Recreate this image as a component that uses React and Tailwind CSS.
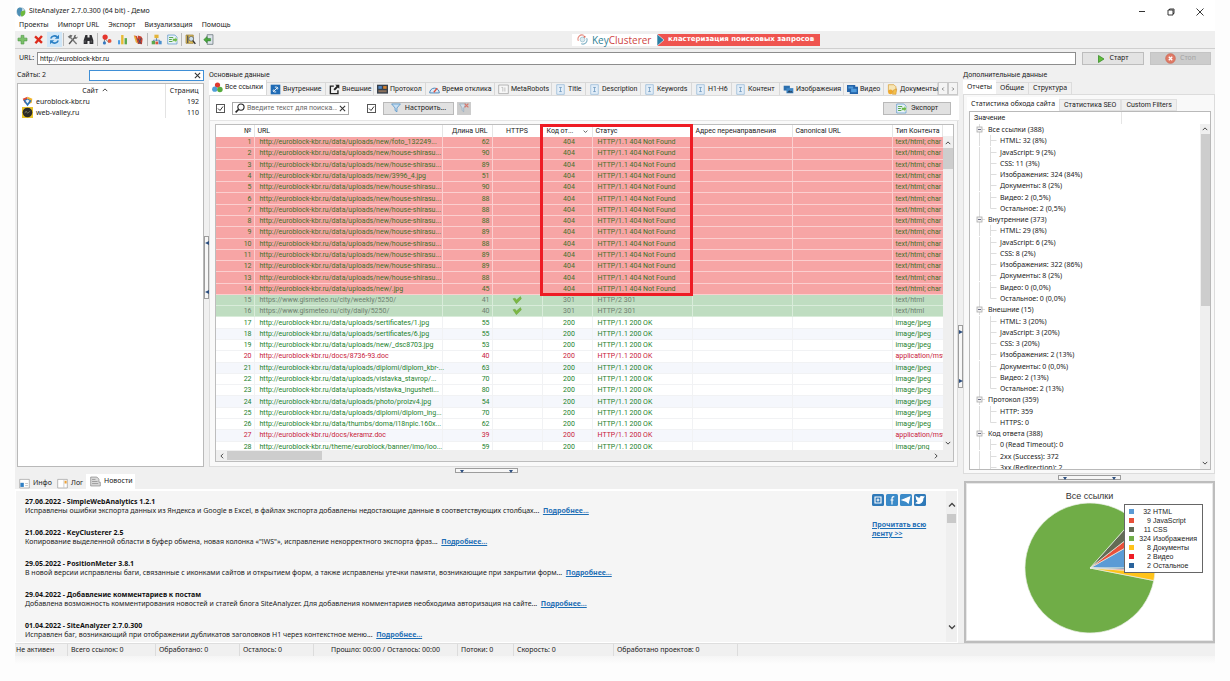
import React, { useState } from "react";

// ---------- data ----------

const HOST = "http://euroblock-kbr.ru/";
const SHIRASU = HOST + "data/uploads/new/house-shirasu...";

const notFound = [
  [HOST + "data/uploads/new/foto_132249...", 62],
  [SHIRASU, 90],
  [SHIRASU, 89],
  [HOST + "data/uploads/new/3996_4.jpg", 51],
  [SHIRASU, 90],
  [SHIRASU, 88],
  [SHIRASU, 88],
  [SHIRASU, 88],
  [SHIRASU, 89],
  [SHIRASU, 88],
  [SHIRASU, 89],
  [SHIRASU, 89],
  [SHIRASU, 88],
  [HOST + "data/uploads/new/.jpg", 45],
].map(([url, len]) => ({ url, len, code: 404, status: "HTTP/1.1 404 Not Found", type: "text/html; char", kind: "error" }));

const redirects = [
  ["https://www.gismeteo.ru/city/weekly/5250/", 41],
  ["https://www.gismeteo.ru/city/daily/5250/", 40],
].map(([url, len]) => ({ url, len, https: true, code: 301, status: "HTTP/2 301", type: "text/html", kind: "redirect" }));

const ok = [
  ["data/uploads/sertificates/1.jpg", 55, "image/jpeg"],
  ["data/uploads/sertificates/6.jpg", 55, "image/jpeg"],
  ["data/uploads/new/_dsc8703.jpg", 53, "image/jpeg"],
  ["docs/8736-93.doc", 40, "application/msw"],
  ["data/uploads/diplomi/diplom_kbr-...", 63, "image/jpeg"],
  ["data/uploads/vistavka_stavrop/...", 70, "image/jpeg"],
  ["data/uploads/vistavka_ingusheti...", 80, "image/jpeg"],
  ["data/uploads/photo/proizv4.jpg", 54, "image/jpeg"],
  ["data/uploads/diplomi/diplom_ing...", 70, "image/jpeg"],
  ["data/thumbs/doma/l18npic.160x...", 62, "image/jpeg"],
  ["docs/keramz.doc", 39, "application/msw"],
  ["theme/euroblock/banner/imo/loo...", 59, "image/png"],
].map(([path, len, type]) => ({
  url: HOST + path,
  len,
  code: 200,
  status: "HTTP/1.1 200 OK",
  type,
  kind: type === "application/msw" ? "doc" : "ok",
}));

const rows = [...notFound, ...redirects, ...ok];

const rowStyle = {
  error: "bg-[#f7a5a5] text-[#44702a]",
  redirect: "bg-[#bfddc1] text-[#6f7f70]",
  ok: "text-[#23822c]",
  doc: "text-[#c8203a]",
};

const cellBorder = {
  error: "border-[#fbcfcf]",
  redirect: "border-[#d9ecda]",
  ok: "border-[#f1f2f4]",
  doc: "border-[#f1f2f4]",
};

const tree = [
  ["Все ссылки (388)", ["HTML: 32 (8%)", "JavaScript: 9 (2%)", "CSS: 11 (3%)", "Изображения: 324 (84%)", "Документы: 8 (2%)", "Видео: 2 (0,5%)", "Остальное: 2 (0,5%)"]],
  ["Внутренние (373)", ["HTML: 29 (8%)", "JavaScript: 6 (2%)", "CSS: 8 (2%)", "Изображения: 322 (86%)", "Документы: 8 (2%)", "Видео: 0 (0,0%)", "Остальное: 0 (0,0%)"]],
  ["Внешние (15)", ["HTML: 3 (20%)", "JavaScript: 3 (20%)", "CSS: 3 (20%)", "Изображения: 2 (13%)", "Документы: 0 (0,0%)", "Видео: 2 (13%)", "Остальное: 2 (13%)"]],
  ["Протокол (359)", ["HTTP: 359", "HTTPS: 0"]],
  ["Код ответа (388)", ["0 (Read Timeout): 0", "2xx (Success): 372", "3xx (Redirection): 2"]],
];

const treeRows = tree.flatMap(([title, items]) => [
  { text: title, head: true },
  ...items.map((text, i) => ({ text, last: i === items.length - 1 && title !== "Код ответа (388)" })),
]);

const news = [
  ["27.06.2022 - SimpleWebAnalytics 1.2.1", "Исправлены ошибки экспорта данных из Яндекса и Google в Excel, в файлах экспорта добавлены недостающие данные в соответствующих столбцах..."],
  ["21.06.2022 - KeyClusterer 2.5", "Копирование выделенной области в буфер обмена, новая колонка «\"!WS\"», исправление некорректного экспорта фраз..."],
  ["29.05.2022 - PositionMeter 3.8.1", "В новой версии исправлены баги, связанные с иконками сайтов и открытием форм, а также исправлены утечки памяти, возникающие при закрытии форм..."],
  ["29.04.2022 - Добавление комментариев к постам", "Добавлена возможность комментирования новостей и статей блога SiteAnalyzer. Для добавления комментариев необходима авторизация на сайте..."],
  ["01.04.2022 - SiteAnalyzer 2.7.0.300", "Исправлен баг, возникающий при отображении дубликатов заголовков H1 через контекстное меню..."],
];

const slices = [
  { label: "HTML", value: 32, color: "#5b9bd5" },
  { label: "JavaScript", value: 9, color: "#e8503a" },
  { label: "CSS", value: 11, color: "#636b55" },
  { label: "Изображения", value: 324, color: "#70ad47" },
  { label: "Документы", value: 8, color: "#ffc31a" },
  { label: "Видео", value: 2, color: "#ee1c25" },
  { label: "Остальное", value: 2, color: "#2a639c" },
];

// ---------- icons ----------

const Svg = ({ children, className = "size-[11px]" }) => (
  <svg viewBox="0 0 16 16" className={`shrink-0 ${className}`} fill="none" aria-hidden="true">
    {children}
  </svg>
);

const AppIcon = () => (
  <Svg className="size-[10px]">
    <circle cx="8" cy="8" r="6.5" fill="#cfe4ee" stroke="#7fa9bd" />
    <path d="M3 2c3-2 7-1 7 2S8 9 8 12l-2 3C2 13 0 6 3 2z" fill="#4f8fb5" />
    <path d="M8 7l6-2c2 4 0 9-5 10-2-2-2-5-1-8z" fill="#6fba3e" />
  </Svg>
);
const PlusIcon = () => (
  <Svg>
    <path d="M6 2h4v4h4.500v4H10v4.500H6V10H1.500V6H6z" fill="#7cc06a" stroke="#4d9a45" />
  </Svg>
);
const CrossIcon = () => (
  <Svg>
    <path d="M3 3.500l10 9.500M13 3L3.500 13.500" stroke="#dd2a1b" strokeWidth="3.500" />
  </Svg>
);
const RefreshIcon = () => (
  <Svg>
    <path d="M2.500 6.500C4 2.500 9 1.500 12 4.500" stroke="#2a7fc4" strokeWidth="2.200" />
    <path d="M14.500 1v6h-6z" fill="#2a7fc4" />
    <path d="M13.500 9.500c-1.500 4-6.500 5-9.500 2" stroke="#2a7fc4" strokeWidth="2.200" />
    <path d="M1.500 15V9h6z" fill="#2a7fc4" />
  </Svg>
);
const ToolsIcon = () => (
  <Svg>
    <path d="M3 14.500L12 4" stroke="#555" strokeWidth="2" />
    <path d="M10 5c-.5-3 1.500-4 3.500-4L12 3.500 13.500 5 15.500 3.500c0 3-2.500 4-4.500 3.200z" fill="#666" />
    <path d="M5.500 5.500l8.500 9" stroke="#777" strokeWidth="2" />
    <path d="M1 4l4-3 3 1-3.500 5z" fill="#6d6d6d" />
  </Svg>
);
const BinocularsIcon = () => (
  <Svg>
    <path d="M3.500 1.500h3V5h3V1.500h3L15 9v5.500H9.500V10h-3v4.500H1V9z" fill="#2f2f33" />
    <path d="M3 9.500v3M12 9.500v3" stroke="#888" />
  </Svg>
);
const NodesIcon = () => (
  <Svg>
    <path d="M5 6l7 7M5 6v7" stroke="#555" />
    <circle cx="6" cy="4.500" r="3.800" fill="#e5352c" />
    <circle cx="12.500" cy="10" r="2.800" fill="#e5533c" />
    <circle cx="5" cy="13" r="2.300" fill="#3479c0" />
  </Svg>
);
const BarsIcon = () => (
  <Svg>
    <path d="M1.500 9h3v6h-3z" fill="#4c9be0" />
    <path d="M6 1.500h3.500V15H6z" fill="#e7bb33" />
    <path d="M11 6h3.500v9H11z" fill="#5aa84e" />
  </Svg>
);
const ChartFlagIcon = () => (
  <Svg>
    <path d="M1.500 2l4 1 1.500 4V2l5 1.500L14 7l-1 8-6-1z" fill="#c9402f" />
    <path d="M1 2l3 1.500 3 10.500-3-2z" fill="#e9b03c" />
    <path d="M7 7l5 7M8 14l4-8" stroke="#34506f" strokeWidth="1.300" />
  </Svg>
);
const SitemapIcon = () => (
  <Svg>
    <path d="M8 5v5M3.500 12V9h9v3" stroke="#3c6fa5" />
    <path d="M5 1h6v5H5z" fill="#e3b43a" />
    <path d="M1 10h5v5H1z" fill="#5aa84e" />
    <path d="M6.500 11h4v4h-4z" fill="#d9573c" />
    <path d="M11 10h4.500v5H11z" fill="#4a90cf" />
  </Svg>
);
const ExportIcon = () => (
  <Svg>
    <path d="M1 1.500h10.500l3 3v10H1z" fill="#e8f2fb" stroke="#5591c4" />
    <path d="M3 5h6M3 8h4M3 11h5" stroke="#5aa84e" strokeWidth="1.500" />
    <path d="M8 6.500h4V4l3.500 4.500L12 13v-2.500H8z" fill="#6cb94a" stroke="#fff" strokeWidth=".6" />
  </Svg>
);
const ZipIcon = () => (
  <Svg>
    <path d="M1.500 1.500H12v12H1.500z" fill="#e9c75b" stroke="#93762a" />
    <path d="M4 2v11" stroke="#555" strokeWidth="2" />
    <circle cx="9" cy="7" r="3.500" fill="#cde0ee" stroke="#555" />
    <path d="M11.500 9.500l3.500 5" stroke="#333" strokeWidth="2" />
  </Svg>
);
const ExitIcon = () => (
  <Svg>
    <path d="M6 1h8.500v14H6z" fill="#dce4ea" stroke="#5c6770" />
    <path d="M6 6.500h5v3.500H6v3L1 8.200 6 3.500z" fill="#4ba83e" stroke="#27752a" strokeWidth=".7" />
  </Svg>
);
const BallsIcon = () => (
  <Svg>
    <circle cx="8" cy="4.500" r="3.800" fill="#e0392f" />
    <circle cx="4" cy="10.500" r="3.800" fill="#4f9fd8" />
    <circle cx="11.500" cy="11" r="4" fill="#56ab3c" />
  </Svg>
);
const InnerIcon = () => (
  <Svg>
    <path d="M1 1h14v14H1z" fill="#1f6bb5" />
    <path d="M5 11l6-6M7 4.500h2.500c2 0 2.500 2 1 3.500M9 11.500H6.500c-2 0-2.500-2-1-3.500" stroke="#fff" strokeWidth="1.300" />
  </Svg>
);
const OuterIcon = () => (
  <Svg>
    <path d="M7 3H2v11h11V9" stroke="#222" strokeWidth="2" />
    <path d="M9 1h6v6l-2-2-4.500 4.500-2-2L11 3z" fill="#222" />
  </Svg>
);
const ProtocolIcon = () => (
  <Svg>
    <path d="M0 1h16v13H0z" fill="#37404c" />
    <path d="M2 3h5v4H2z" fill="#4f86c4" />
    <path d="M9 3h5v4H9z" fill="#d4822f" />
    <path d="M2 9h12v3H2z" fill="#8a6f5a" />
  </Svg>
);
const GaugeIcon = () => (
  <Svg>
    <path d="M1 13a7 7 0 0 1 14 0z" fill="#dbeaf6" stroke="#4a84b8" strokeWidth="1.400" />
    <path d="M7 12l5-6" stroke="#e04a35" strokeWidth="1.800" />
  </Svg>
);
const RobotsIcon = () => (
  <Svg>
    <path d="M1 1.500h14v12.500H1z" fill="#f7f7f7" stroke="#999" />
    <path d="M5 5h2v6M10 5v6" stroke="#aaa" />
  </Svg>
);
const PageIcon = () => (
  <Svg>
    <path d="M2.500 1h11v14h-11z" fill="#e3eef8" stroke="#8fb4d6" />
    <path d="M6 5h4M8 5v6M6 11h4" stroke="#5f8db8" />
  </Svg>
);
const PictureIcon = () => (
  <Svg>
    <path d="M1 2.500h9v7H1z" fill="#2c6fae" />
    <path d="M5 6h10v7.500H5z" fill="#3d86c6" />
    <path d="M6 12.500l3-3.500 2 2 1.500-1 2 2.500z" fill="#27405c" />
  </Svg>
);
const FilmIcon = () => (
  <Svg>
    <path d="M0 1.500h12v10H0zM4 4h12v10.500H4z" fill="#2463a8" />
    <path d="M2 3.500h7v3H2zM6 7h8v5H6z" fill="#4f9bdc" />
  </Svg>
);
const DocsIcon = () => (
  <Svg>
    <path d="M2 1h8l3 3v7H2z" fill="#f6e5b5" stroke="#d79b2d" />
    <circle cx="5" cy="11.500" r="3.500" fill="#efa92f" />
    <path d="M9 9l5-2-1 8H8z" fill="#f3c14b" stroke="#c8882a" strokeWidth=".7" />
  </Svg>
);
const PlayIcon = () => (
  <Svg className="size-2">
    <path d="M3 1l11 7-11 7z" fill="#63bd3c" stroke="#318a23" strokeWidth="1.500" />
  </Svg>
);
const StopIcon = () => (
  <Svg>
    <circle cx="8" cy="8" r="7" fill="#e07a66" stroke="#c96450" />
    <path d="M5.500 5.500l5 5M10.500 5.500l-5 5" stroke="#fff" strokeWidth="2" />
  </Svg>
);
const FunnelIcon = () => (
  <Svg className="size-[10px]">
    <path d="M1 1.500h14L9.500 8v6L6.500 12V8z" fill="#c6def2" stroke="#4a8cc4" strokeWidth="1.200" />
  </Svg>
);
const SearchIcon = () => (
  <Svg className="size-[10px]">
    <circle cx="9.500" cy="6.500" r="5" stroke="#222" strokeWidth="1.800" />
    <path d="M6 10l-5 5" stroke="#222" strokeWidth="2.600" />
  </Svg>
);
const XMark = () => (
  <Svg className="size-[7px]">
    <path d="M2 2l12 12M14 2L2 14" stroke="#333" strokeWidth="2.400" />
  </Svg>
);
const CheckMark = () => (
  <Svg className="size-[10px] mx-auto">
    <path d="M1.500 6L5 5l2 3 6.500-5.500L15 6l-8 8z" fill="#7cb843" stroke="#5d9a35" strokeWidth=".6" />
  </Svg>
);
const Chevron = ({ dir, className = "size-[7px]" }) => {
  const d = { up: "M2 11l6-6 6 6", down: "M2 5l6 6 6-6", left: "M11 2L5 8l6 6", right: "M5 2l6 6-6 6" }[dir];
  return (
    <Svg className={className}>
      <path d={d} stroke="#444" strokeWidth="2.600" />
    </Svg>
  );
};
const SiteCube = () => (
  <Svg>
    <path d="M8 1L1 4l3 6 4 2z" fill="#e24a34" />
    <path d="M8 1l7 3-1 6-6 2z" fill="#f0b52d" />
    <path d="M2 6l6 9 6-8-6-3z" fill="#2a72b5" />
    <path d="M8 5l3 2-3 4-3-4z" fill="#e9f1f8" />
  </Svg>
);
const SiteGear = () => (
  <Svg>
    <path d="M0 0h16v16H0z" fill="#e6c229" />
    <circle cx="8" cy="8" r="7" fill="#2c2c28" />
    <path d="M4 9l2-3 2 3 4-3" stroke="#8a8a72" />
  </Svg>
);
const InfoTabIcon = () => (
  <Svg>
    <path d="M1 2h14v12.500H1z" fill="#fff" stroke="#9a9a9a" />
    <path d="M2 7h5v6H2z" fill="#2f7fc4" />
    <path d="M9 8h4M9 11h4" stroke="#aaa" />
  </Svg>
);
const LogTabIcon = () => (
  <Svg>
    <path d="M1 2h14v12.500H1z" fill="#fff" stroke="#9a9a9a" />
    <path d="M10 3v11" stroke="#bbb" />
    <path d="M11 4h3v4h-3z" fill="#eda239" />
  </Svg>
);
const NewsTabIcon = () => (
  <Svg>
    <path d="M1 1.500h9l3 3V9H15v5.500H1z" fill="#d9d9d9" stroke="#858585" />
    <path d="M3 5h5M3 8h8M3 11h9" stroke="#858585" />
  </Svg>
);
const ClusterLogo = () => (
  <Svg>
    <path d="M2 10a6 6 0 0 1 8-8" stroke="#e3887d" strokeWidth="1.500" />
    <circle cx="8" cy="8" r="3.500" fill="#dcebf0" stroke="#8fb9c9" />
    <path d="M14 6a6 6 0 0 1-8 8" stroke="#7fb0c4" strokeWidth="1.500" />
    <circle cx="11" cy="4" r="1.500" fill="#db6a5c" />
  </Svg>
);

// ---------- small parts ----------

const Sep = () => <span className="w-px h-[13px] bg-[#b9b9b9]" />;

const ToolButton = ({ label, active, children }) => (
  <button aria-label={label} className={`w-[15px] h-[15px] grid place-items-center ${active ? "bg-[#cfe6f8]" : ""}`}>
    {children}
  </button>
);

const Tick = ({ label }) => (
  <span className="grid size-[9px] shrink-0">
    <input type="checkbox" defaultChecked aria-label={label} className="col-start-1 row-start-1 appearance-none size-[9px] border border-[#555] bg-white" />
    <svg viewBox="0 0 9 9" className="col-start-1 row-start-1 size-[9px] pointer-events-none" fill="none">
      <path d="M2 4.500l2 2 3-4" stroke="#333" />
    </svg>
  </span>
);

const Grip = ({ vertical, dir }) => (
  <span className={`flex justify-between items-center border border-[#9d9d9d] bg-[#f7f7f7] ${vertical ? "flex-col w-[5px] h-[63px] py-1" : "w-[63px] h-[5px] px-1"}`}>
    {[0, 1].map((i) => (
      <svg key={i} viewBox="0 0 4 4" className="size-1" aria-hidden="true">
        <path d={dir === "left" ? "M4 0v4L0 2z" : dir === "right" ? "M0 0v4l4-2z" : "M0 1h4L2 4z"} fill="#2d4f80" />
      </svg>
    ))}
  </span>
);

const Pie = () => {
  const total = slices.reduce((sum, s) => sum + s.value, 0);
  let angle = 0;
  const point = (a) => `${66 + 65 * Math.cos(a)} ${66 - 65 * Math.sin(a)}`;
  return (
    <svg viewBox="0 0 132 132" className="size-[132px]" role="img" aria-label="Все ссылки">
      {slices.map((s) => {
        const from = angle;
        angle += (s.value / total) * Math.PI * 2;
        const large = angle - from > Math.PI ? 1 : 0;
        return <path key={s.label} d={`M66 66L${point(from)}A65 65 0 ${large} 0 ${point(angle)}Z`} fill={s.color} stroke="#e8eee4" strokeWidth=".7" />;
      })}
    </svg>
  );
};

// ---------- sections ----------

const Header = () => (
  <header>
    <div className="flex items-center h-[19px] pt-1 pl-px pr-[10px]">
      <AppIcon />
      <h1 className="ml-[3px] flex-1">SiteAnalyzer 2.7.0.300 (64 bit) - Демо</h1>
      <div className="flex gap-[19px]">
        <button aria-label="Свернуть" className="w-[10px] grid place-items-center"><span className="w-[6px] h-px bg-[#333]" /></button>
        <button aria-label="Развернуть" className="w-[10px] grid place-items-center">
          <Svg className="size-2"><path d="M2 4h10v10H2zM5 4V2h9v9h-2" stroke="#222" strokeWidth="1.800" /></Svg>
        </button>
        <button aria-label="Закрыть" className="w-[10px] grid place-items-center">
          <Svg className="size-2"><path d="M1 1l14 14M15 1L1 15" stroke="#222" strokeWidth="1.800" /></Svg>
        </button>
      </div>
    </div>
    <nav className="flex items-center h-3 pl-1 gap-[9px]">
      {["Проекты", "Импорт URL", "Экспорт", "Визуализация", "Помощь"].map((m) => (
        <button key={m}>{m}</button>
      ))}
    </nav>
    <div className="flex items-center h-[18px] bg-[#efefef] border-b border-[#cfcfcf]">
      <div className="flex items-center gap-px w-[557px] shrink-0">
        <ToolButton label="Добавить"><PlusIcon /></ToolButton>
        <ToolButton label="Удалить"><CrossIcon /></ToolButton>
        <ToolButton label="Обновить" active><RefreshIcon /></ToolButton>
        <Sep />
        <ToolButton label="Настройки"><ToolsIcon /></ToolButton>
        <ToolButton label="Поиск"><BinocularsIcon /></ToolButton>
        <Sep />
        <ToolButton label="Граф"><NodesIcon /></ToolButton>
        <ToolButton label="Диаграмма"><BarsIcon /></ToolButton>
        <ToolButton label="График"><ChartFlagIcon /></ToolButton>
        <Sep />
        <ToolButton label="Карта сайта"><SitemapIcon /></ToolButton>
        <ToolButton label="Экспорт в Excel"><ExportIcon /></ToolButton>
        <Sep />
        <ToolButton label="Архив"><ZipIcon /></ToolButton>
        <Sep />
        <ToolButton label="Выход"><ExitIcon /></ToolButton>
      </div>
      <a href="#keyclusterer" className="flex h-3 items-center">
        <span className="flex items-center gap-1 h-full bg-white w-[85px] pl-[5px] text-[10px] leading-3 font-['Open_Sans',sans-serif]">
          <ClusterLogo />
          <span className="text-[#2f8296]">Key<span className="text-[#cf4543]">Clusterer</span></span>
        </span>
        <span className="flex items-center h-full bg-[#ef544f] text-white font-bold pr-[6px] font-['DejaVu_Sans',sans-serif]">
          <svg viewBox="0 0 8 12" className="w-2 h-3 mr-[3px]" aria-hidden="true"><path d="M0 0l7 6-7 6z" fill="#2b7fa4" stroke="#fff" strokeWidth=".6" /></svg>
          кластеризация поисковых запросов
        </span>
      </a>
    </div>
    <div className="flex items-center h-[19px] pl-1 pr-1 bg-[#f0f0f0]">
      <label htmlFor="url" className="w-[18px]">URL:</label>
      <input id="url" defaultValue="http://euroblock-kbr.ru" className="flex-1 h-[13px] px-0.5 bg-white border border-[#8d8d8d] font-[Roboto,sans-serif]" />
      <button className="ml-[6px] flex items-center justify-center gap-1 w-[62px] h-[13px] bg-[#e3e3e3] border border-[#bdbdbd]">
        <PlayIcon />Старт
      </button>
      <button disabled className="ml-[6px] flex items-center justify-center gap-1 w-[61px] h-[13px] bg-[#cccccc] border border-[#c4c4c4] text-[#a5a5a5]">
        <StopIcon />Стоп
      </button>
    </div>
  </header>
);

const Sites = () => (
  <section className="w-[189px] shrink-0 pl-0.5 flex flex-col">
    <div className="flex items-center h-[15px]">
      <label htmlFor="site-filter" className="w-[78px]">Сайты: 2</label>
      <div className="flex-1 flex items-center h-[11px] pr-0.5 bg-white border border-[#3f8fd6]">
        <input id="site-filter" className="flex-1 min-w-0 px-0.5 outline-none h-[9px]" />
        <button aria-label="Очистить"><XMark /></button>
      </div>
    </div>
    <div className="flex-1 bg-white border border-[#b9b9b9]">
      <table className="w-full table-fixed leading-[11px]">
        <thead>
          <tr className="h-3">
            <th className="font-normal pl-2">
              <span className="inline-flex items-center gap-1">Сайт <Chevron dir="up" className="size-[6px]" /></span>
            </th>
            <th className="font-normal w-[38px] border-l border-[#e3e3e3]">Страниц</th>
          </tr>
        </thead>
        <tbody>
          <tr>
            <td><span className="flex items-center gap-[3px] pl-1"><SiteCube />euroblock-kbr.ru</span></td>
            <td className="text-right pr-1 border-l border-[#e3e3e3]">192</td>
          </tr>
          <tr>
            <td><span className="flex items-center gap-[3px] pl-1"><SiteGear />web-valley.ru</span></td>
            <td className="text-right pr-1 border-l border-[#e3e3e3]">110</td>
          </tr>
        </tbody>
      </table>
    </div>
  </section>
);

const mainTabs = [
  ["Все ссылки", BallsIcon, "w-[58px]"],
  ["Внутренние", InnerIcon, "w-[59px]"],
  ["Внешние", OuterIcon, "w-[48px]"],
  ["Протокол", ProtocolIcon, "w-[52px]"],
  ["Время отклика", GaugeIcon, "w-[69px]"],
  ["MetaRobots", RobotsIcon, "w-[57px]"],
  ["Title", PageIcon, "w-[34px]"],
  ["Description", PageIcon, "w-[55px]"],
  ["Keywords", PageIcon, "w-[51px]"],
  ["H1-H6", PageIcon, "w-[40px]"],
  ["Контент", PageIcon, "w-[48px]"],
  ["Изображения", PictureIcon, "w-[64px]"],
  ["Видео", FilmIcon, "w-[40px]"],
  ["Документы", DocsIcon, "w-[54px]"],
];

const columns = [
  ["№", "w-[38px]", "text-right pr-0.5"],
  ["URL", "w-[188px]", "text-left pl-[3px]"],
  ["Длина URL", "w-[50px]", "text-right pr-1"],
  ["HTTPS", "w-[50px]", "text-center"],
  ["Код от...", "w-[50px]", "text-left pl-1"],
  ["Статус", "w-[100px]", "text-left pl-[3px]"],
  ["Адрес перенаправления", "w-[100px]", "text-left pl-[3px]"],
  ["Canonical URL", "w-[100px]", "text-left pl-[3px]"],
  ["Тип Контента", "", "text-left pl-[3px]"],
];

const LinksTable = () => (
  <div className="relative flex-1 min-h-0 flex flex-col bg-white border border-[#bdbdbd]">
    <div className="flex-1 min-h-0 flex">
      <div className="flex-1 min-w-0 overflow-hidden">
        <table className="w-full h-[328px] table-fixed leading-[10px] whitespace-nowrap">
          <thead>
            <tr className="h-3">
              {columns.map(([name, width, align]) => (
                <th key={name} className={`font-normal border-r border-[#e5e5e5] ${width} ${align}`}>
                  {name === "Код от..." ? (
                    <span className="flex items-center justify-between pr-1">{name}<Chevron dir="down" className="size-[5px]" /></span>
                  ) : name}
                </th>
              ))}
            </tr>
          </thead>
          <tbody>
            {rows.map((row, i) => (
              <tr key={i} className={`border-b ${cellBorder[row.kind]} ${rowStyle[row.kind]} ${i > 15 && i % 3 === 2 ? "bg-[#f5f7fc]" : ""}`}>
                <td className={`text-right pr-0.5 border-r ${cellBorder[row.kind]}`}>{i + 1}</td>
                <td className={`pl-[5px] border-r ${cellBorder[row.kind]}`}>{row.url}</td>
                <td className={`text-right pr-0.5 border-r ${cellBorder[row.kind]}`}>{row.len}</td>
                <td className={`border-r ${cellBorder[row.kind]}`}>{row.https && <CheckMark />}</td>
                <td className={`text-center pl-1 border-r ${cellBorder[row.kind]}`}>{row.code}</td>
                <td className={`pl-[5px] border-r ${cellBorder[row.kind]}`}>{row.status}</td>
                <td className={`border-r ${cellBorder[row.kind]}`} />
                <td className={`border-r ${cellBorder[row.kind]}`} />
                <td className="pl-[3px]">{row.type}</td>
              </tr>
            ))}
          </tbody>
        </table>
      </div>
      <div className="w-[10px] mt-[11px] bg-[#efefef] flex flex-col items-center pt-1 pb-1">
        <Chevron dir="up" className="size-[6px]" />
        <span className="mt-0.5 w-full h-[21px] bg-[#cdcdcd]" />
        <Chevron dir="down" className="size-[6px] mt-auto" />
      </div>
    </div>
    <div className="h-[11px] bg-[#efefef] flex items-center pl-[3px] pr-[14px]">
      <Chevron dir="left" className="size-[6px]" />
      <span className="ml-0.5 w-[95px] h-[9px] bg-[#cdcdcd]" />
      <Chevron dir="right" className="size-[6px] ml-auto" />
    </div>
    {/* highlight around the 404 block */}
    <div className="absolute -top-px left-[324px] w-[153px] h-[172px] border-3 border-[#ee1c24]" />
  </div>
);

const MainData = () => {
  const [tab, setTab] = useState("Все ссылки");
  return (
    <section className="flex-1 min-w-0 flex flex-col font-[Roboto,sans-serif]">
      <h2 className="h-3 pt-0.5 leading-[10px]">Основные данные</h2>
      <div className="flex items-end h-[15px]">
        {mainTabs.map(([name, Icon, width]) => (
          <button
            key={name}
            onClick={() => setTab(name)}
            className={`${width} shrink-0 flex items-center gap-[2px] pl-[3px] whitespace-nowrap border-r border-[#d8d8d8] ${tab === name ? "h-[15px] bg-white" : "h-[13px] bg-[#f0f0f0] border-t"}`}
          >
            <Icon />{name}
          </button>
        ))}
        <div className="ml-auto flex">
          {["left", "right"].map((dir) => (
            <button key={dir} aria-label={dir === "left" ? "Назад" : "Вперёд"} className="w-[10px] h-[13px] grid place-items-center bg-[#f4f4f4] border border-[#c9c9c9]">
              <Chevron dir={dir} className="size-1" />
            </button>
          ))}
        </div>
      </div>
      <div className="flex-1 min-h-0 flex flex-col bg-[#f9f9f9] border border-[#dcdcdc] pl-[5px] pr-[3px] pb-1">
        <div className="flex items-center h-[25px] bg-white -mx-[5px] pl-[6px] pr-2 mb-[3px] border-b border-[#e5e5e5]">
          <Tick label="Фильтр по тексту" />
          <div className="ml-[7px] flex items-center gap-0.5 w-[117px] h-[13px] px-0.5 border border-[#a9a9a9] bg-white">
            <SearchIcon />
            <input aria-label="Поиск" placeholder="Введите текст для поиска..." className="flex-1 min-w-0 outline-none placeholder:text-[#666]" />
            <button aria-label="Очистить"><XMark /></button>
          </div>
          <span className="w-[18px]" />
          <Tick label="Использовать фильтр" />
          <button className="ml-[7px] flex items-center justify-center gap-1 w-[71px] h-[13px] bg-[#e1e1e1] border border-[#b9b9b9] font-['Noto_Sans',sans-serif]">
            <FunnelIcon />Настроить...
          </button>
          <button disabled aria-label="Сбросить фильтр" className="ml-[3px] w-[14px] h-[13px] grid place-items-center bg-[#cccccc]">
            <Svg className="size-[10px]">
              <path d="M1 1.500h10L7.500 8v6L5 12V8z" fill="#d5dfe8" stroke="#8aa3b8" />
              <path d="M9 1l6 6M15 1L9 7" stroke="#d9786c" strokeWidth="2" />
            </Svg>
          </button>
          <button className="ml-auto flex items-center justify-center gap-1 w-[68px] h-[13px] bg-[#e1e1e1] border border-[#b9b9b9]">
            <ExportIcon />Экспорт
          </button>
        </div>
        <LinksTable />
      </div>
    </section>
  );
};

const NewsPanel = () => (
  <section className="mr-[5px] flex flex-col">
    <div className="flex items-end h-[15px]">
      {[["Инфо", InfoTabIcon, "w-[38px]"], ["Лог", LogTabIcon, "w-[33px]"], ["Новости", NewsTabIcon, "w-[49px]"]].map(([name, Icon, width]) => (
        <button key={name} className={`${width} flex items-center gap-[3px] pl-1 ${name === "Новости" ? "h-[15px] bg-white" : "h-3"}`}>
          <Icon />{name}
        </button>
      ))}
    </div>
    <div className="flex-1 flex border border-white border-t-2 bg-[#f5f5f5] leading-[9px]">
      <ul className="flex-1 pt-[6px] pb-[3px] pl-[9px]">
        {news.map(([title, text]) => (
          <li key={title} className="not-last:h-[31px]">
            <h3 className="font-bold text-[#111]">{title}</h3>
            <p>{text}&nbsp; <a href="#more" className="font-bold underline text-[#1f6fb5]">Подробнее...</a></p>
          </li>
        ))}
      </ul>
      <aside className="w-[74px] pt-[3px]">
        <div className="flex gap-0.5">
          {[
            ["ВКонтакте", "M4 4h8v8H4zM8 6v4M6 8h4"],
            ["Facebook", "M8 14V6c0-2 1-2.500 3-2.500M6 8h4"],
            ["Telegram", "M3 8l10-4-2 8-3-2.500z"],
            ["Twitter", "M3 12c6 2 9-2 9-7l1-1-3-.5C8 3.500 8 5 8 6 6 6 4 5 3 4c0 3 1 4 3 5.500z"],
          ].map(([name, d], i) => (
            <a key={name} href="#social" aria-label={name}>
              <Svg className="size-3">
                <rect width="16" height="16" rx="2" fill={i % 3 === 0 ? "#2f79b8" : "#3b8ac8"} />
                <path d={d} stroke="#fff" strokeWidth="1.500" fill={i > 1 ? "#fff" : "none"} />
              </Svg>
            </a>
          ))}
        </div>
        <a href="#all" className="block mt-[14px] font-bold underline text-[#1f6fb5]">Прочитать всю<br />ленту &gt;&gt;</a>
      </aside>
      <div className="w-[11px] bg-[#efefef] flex flex-col items-center pt-[10px] pb-[11px]">
        <Chevron dir="up" className="size-[8px]" />
        <span className="mt-[5px] w-[9px] h-[9px] bg-[#c9c9c9]" />
        <Chevron dir="down" className="size-[8px] mt-auto" />
      </div>
    </div>
  </section>
);

const Extra = () => (
  <section className="w-[252px] shrink-0 flex flex-col min-h-0">
    <h2 className="h-3 pt-0.5 leading-[10px] font-[Roboto,sans-serif]">Дополнительные данные</h2>
    <div className="flex items-end h-[14px]">
      {["Отчеты", "Общие", "Структура"].map((t, i) => (
        <button key={t} className={`px-1 ${i === 0 ? "h-[14px] bg-white" : "h-3 border-t border-r border-[#dcdcdc]"}`}>{t}</button>
      ))}
    </div>
    <div className="flex-1 min-h-0 flex flex-col bg-[#f9f9f9] border border-[#dcdcdc] p-[3px] pt-0.5">
      <div className="flex items-end h-[14px]">
        {["Статистика обхода сайта", "Статистика SEO", "Custom Filters"].map((t, i) => (
          <button key={t} className={`px-1 whitespace-nowrap ${i === 0 ? "h-[14px] bg-white" : "h-3 bg-[#efefef] border border-[#e0e0e0] font-[Roboto,sans-serif]"}`}>{t}</button>
        ))}
      </div>
      <div className="flex-1 min-h-0 ml-0.5 flex flex-col bg-white border border-[#b9b9b9] overflow-hidden">
        <div className="h-3 shrink-0 pl-1 leading-3 font-[Roboto,sans-serif]"><span className="block w-[148px] border-r border-[#e5e5e5]">Значение</span></div>
        <div className="flex-1 min-h-0 flex">
          <ul className="flex-1 min-h-0 grid content-start auto-rows-fr h-[349px] leading-[11px]">
            {treeRows.map((row, i) =>
              row.head ? (
                <li key={i} className="flex items-center pl-[6px]">
                  <svg viewBox="0 0 9 11" className="w-[9px] h-[11px]" fill="none">
                    <path d="M3.500 0v11M6 5.500h3" stroke="#ddd" />
                    <rect x="1" y="3" width="5" height="5" fill="#f4f4f4" stroke="#aaa" strokeWidth=".8" />
                    <path d="M2 5.500h3" stroke="#446" strokeWidth=".8" />
                  </svg>
                  <span className="ml-[3px]">{row.text}</span>
                </li>
              ) : (
                <li key={i} className="flex items-center pl-[6px]">
                  <svg viewBox="0 0 22 11" className="w-[22px] h-[11px]" fill="none">
                    <path d={row.last ? "M3.500 0v11M14.500 0v5.500h6" : "M3.500 0v11M14.500 0v11M14.500 5.500h6"} stroke="#ddd" />
                  </svg>
                  <span className="ml-0.5">{row.text}</span>
                </li>
              )
            )}
          </ul>
          <div className="w-[10px] bg-[#efefef] flex flex-col items-center pt-0.5 pb-[3px]">
            <Chevron dir="up" className="size-[6px]" />
            <span className="mt-0.5 w-[9px] h-[172px] bg-[#cdcdcd]" />
            <Chevron dir="down" className="size-[6px] mt-auto" />
          </div>
        </div>
      </div>
    </div>
    <div className="h-[7px] flex items-center justify-center"><Grip /></div>
    <div className="relative ml-px bg-white border-2 border-[#bdbdbd] outline-1 outline-[#e8e8e8] -outline-offset-3 h-[162px] flex flex-col items-center pt-[9px] font-['Liberation_Sans',Arial,sans-serif]">
      <h3 className="text-[9px] leading-[9px] text-[#333] mb-px">Все ссылки</h3>
      <Pie />
      <ul className="absolute top-[21px] right-[10px] w-[79px] bg-white border border-[#666] py-[2px] px-1 leading-[9px]">
        {slices.map((s) => (
          <li key={s.label} className="flex items-center">
            <span className="size-[5px]" style={{ background: s.color }} />
            <span className="w-[17px] text-right mr-[2px]">{s.value}</span>
            {s.label}
          </li>
        ))}
      </ul>
    </div>
  </section>
);

const StatusBar = () => (
  <footer className="flex items-center h-[13px] bg-[#f0f0f0] border-t border-[#dedede] leading-3 whitespace-nowrap">
    {[
      ["Не активен", "w-[53px] pl-px"],
      ["Всего ссылок: 0", "w-[88px] pl-[3px]"],
      ["Обработано: 0", "w-[84px] pl-[3px]"],
      ["Осталось: 0", "w-[74px] pl-[3px]"],
      ["Прошло: 00:00 / Осталось: 00:00", "w-[144px] text-center"],
      ["Потоки: 0", "w-[56px] pl-[3px]"],
      ["Скорость: 0", "w-[100px] pl-[3px]"],
      ["Обработано проектов: 0", "w-[124px] pl-[3px]"],
    ].map(([text, cls]) => (
      <span key={text} className={`border-r border-[#dcdcdc] ${cls}`}>{text}</span>
    ))}
  </footer>
);

export default function App() {
  return (
    <div className="h-screen min-h-[640px] flex flex-col px-[15px] pb-[25px] bg-[#fdfdfd] font-['Noto_Sans','Open_Sans',sans-serif] text-[7px] text-[#222]">
      <div className="flex-1 min-h-0 flex flex-col bg-[#f0f0f0]">
        <div className="bg-white"><Header /></div>
        <main className="flex-1 min-h-0 flex">
          <div className="flex-1 min-w-0 flex flex-col">
            <div className="flex-1 min-h-0 flex">
              <Sites />
              <div className="w-[5px] flex items-center"><Grip vertical dir="left" /></div>
              <MainData />
              <div className="w-[5px] flex items-center pt-[178px]"><Grip vertical dir="right" /></div>
            </div>
            <div className="h-[7px] pr-[5px] flex items-center justify-center"><Grip /></div>
            <NewsPanel />
          </div>
          <Extra />
        </main>
        <StatusBar />
      </div>
      <div className="h-2 -mb-2 bg-linear-to-b from-[#f5f5f5] to-[#fdfdfd]" />
    </div>
  );
}
